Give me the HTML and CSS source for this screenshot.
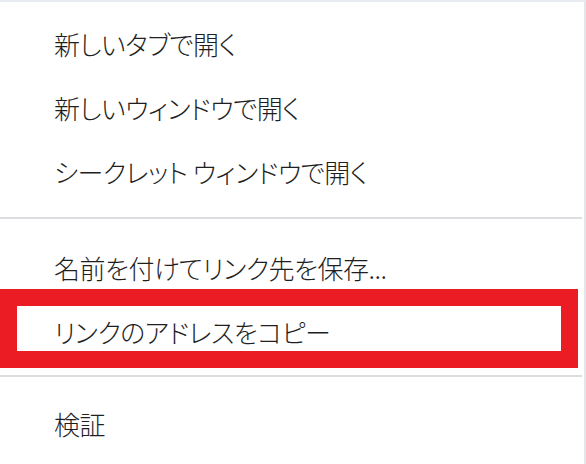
FILE: index.html
```html
<!DOCTYPE html>
<html lang="ja">
<head>
    <meta charset="UTF-8">
    <meta name="viewport" content="width=device-width, initial-scale=1.0">
    <title>コンテキストメニュー</title>
    <link rel="stylesheet" href="styles.css">
</head>
<body>
    <div class="menu">
        <div class="item">新しいタブで開く</div>
        <div class="item">新しいウィンドウで開く</div>
        <div class="item">シークレット ウィンドウで開く</div>
        <div class="separator"></div>
        <div class="item">名前を付けてリンク先を保存...</div>
        <div class="item highlighted">
            リンクのアドレスをコピー
            <span class="mark"></span>
        </div>
        <div class="separator tight"></div>
        <div class="item">検証</div>
    </div>
</body>
</html>
```

FILE: styles.css
```css
body {
    margin: 0;
    background-color: #ffffff;
    font-family: "Noto Sans CJK JP", "Noto Sans", sans-serif;
    color: #1f1f1f;
}
.menu {
    width: 584px;
    height: 462px;
    border-top: 2px solid #e8ebf0;
    border-right: 2px solid #e4e6ea;
    padding-top: 9px;
    box-sizing: content-box;
}
.item {
    position: relative;
    height: 64px;
    display: flex;
    align-items: center;
    padding-left: 54px;
    font-size: 26px;
    font-weight: 300;
    font-feature-settings: "palt";
    letter-spacing: -0.5px;
    white-space: nowrap;
}
.separator {
    height: 2px;
    width: 582px;
    background-color: #dcdde1;
    margin: 14px 0 16px;
}
.separator.tight {
    margin: 12px 0 14px;
}
.mark {
    position: absolute;
    left: 0;
    top: -10px;
    width: 578px;
    height: 79px;
    border: 17px solid #ec1c24;
    box-sizing: border-box;
}
```
